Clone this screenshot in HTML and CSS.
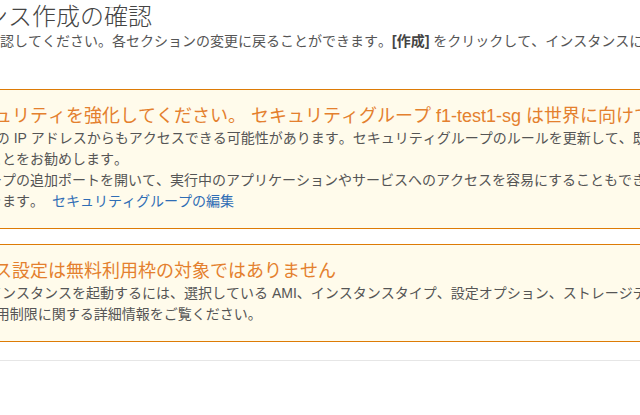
FILE: index.html
```html
<!DOCTYPE html>
<html lang="ja">
<head>
<meta charset="utf-8">
<title>インスタンス作成の確認</title>
<link rel="stylesheet" href="styles.css">
</head>
<body>
<main class="page">
  <h1 class="title">インスタンス作成の確認</h1>
  <p class="intro">設定した内容を確認してください。各セクションの変更に戻ることができます。<b>[作成]</b> をクリックして、インスタンスにキーペアを割り当てます。</p>

  <section class="alert">
    <h2 class="alert-title">まず、セキュリティを強化してください。 セキュリティグループ f1-test1-sg は世界に向けて開かれています。</h2>
    <p class="alert-text">ルール1で任意の IP アドレスからもアクセスできる可能性があります。セキュリティグループのルールを更新して、既知の IP アドレスのみからのアクセスを許可することをお勧めします。</p>
    <p class="alert-text">さらに、グループの追加ポートを開いて、実行中のアプリケーションやサービスへのアクセスを容易にすることもできます。例えば、受信ルールを追加してポートを開きます。 <a class="alert-link" href="#">セキュリティグループの編集</a></p>
  </section>

  <section class="alert">
    <h2 class="alert-title">インスタンス設定は無料利用枠の対象ではありません</h2>
    <p class="alert-text">無料枠対象のインスタンスを起動するには、選択している AMI、インスタンスタイプ、設定オプション、ストレージデバイスを確認してください。なお AWS 無料の使用制限に関する詳細情報をご覧ください。</p>
  </section>

  <hr class="divider">
</main>
</body>
</html>
```

FILE: styles.css
```css
html, body {
  margin: 0;
  padding: 0;
  overflow: hidden;
  background: #ffffff;
}

body {
  font-family: "Liberation Sans", "Noto Sans CJK JP", sans-serif;
  color: #555555;
  font-kerning: none;
  text-spacing-trim: space-all;
}

.page {
  margin-left: -112px;
  width: 1002px;
}

.title {
  margin: 3px 0 0;
  font-size: 24px;
  line-height: 28px;
  font-weight: 300;
  color: #444444;
}

.intro {
  margin: 0;
  font-size: 14px;
  line-height: 21px;
  color: #555555;
  white-space: nowrap;
}

.intro b {
  color: #444444;
}

.alert {
  margin-top: 37px;
  border: 1px solid #dd7b06;
  background: #fffbeb;
  padding: 14px 15px 16px;
}

.alert + .alert {
  margin-top: 15px;
}

.alert-title {
  margin: 0;
  font-size: 18px;
  line-height: 24px;
  font-weight: normal;
  color: #e4802e;
}

.alert-text {
  margin: 0;
  font-size: 14px;
  line-height: 21px;
  color: #555555;
}

.alert-link {
  margin-left: 4px;
  color: #2f6db5;
  text-decoration: none;
}

.divider {
  margin: 18px 0 0;
  border: 0;
  border-top: 1px solid #e6e6e6;
  height: 0;
}
```
